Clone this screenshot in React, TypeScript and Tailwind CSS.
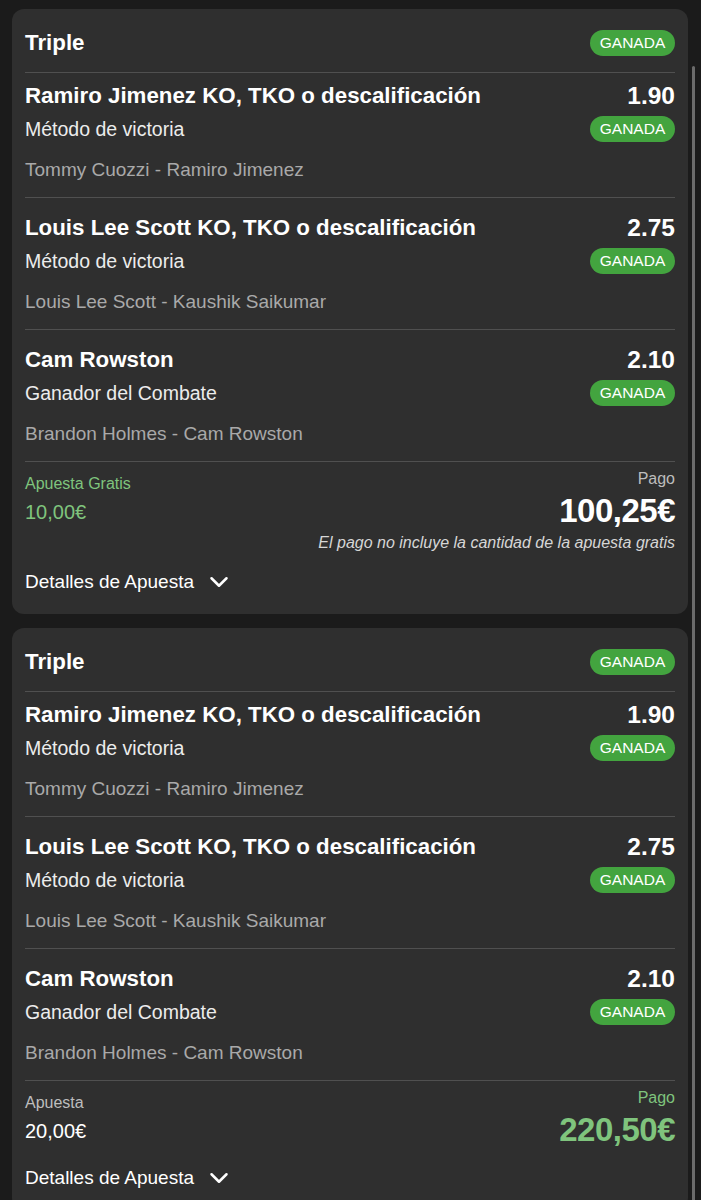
import { ChevronDown } from 'lucide-react';

interface Leg {
  pick: string;
  market: string;
  event: string;
  odds: string;
}

interface Bet {
  legs: Leg[];
  stakeLabel: string;
  stake: string;
  payout: string;
  freeBet: boolean;
}

const LEGS: Leg[] = [
  { pick: 'Ramiro Jimenez KO, TKO o descalificación', market: 'Método de victoria', event: 'Tommy Cuozzi - Ramiro Jimenez', odds: '1.90' },
  { pick: 'Louis Lee Scott KO, TKO o descalificación', market: 'Método de victoria', event: 'Louis Lee Scott - Kaushik Saikumar', odds: '2.75' },
  { pick: 'Cam Rowston', market: 'Ganador del Combate', event: 'Brandon Holmes - Cam Rowston', odds: '2.10' },
];

const BETS: Bet[] = [
  { legs: LEGS, stakeLabel: 'Apuesta Gratis', stake: '10,00€', payout: '100,25€', freeBet: true },
  { legs: LEGS, stakeLabel: 'Apuesta', stake: '20,00€', payout: '220,50€', freeBet: false },
];

function Badge() {
  return (
    <span className="inline-flex h-[26px] w-[85px] items-center justify-center rounded-full bg-[#43a43f] text-[15.5px] leading-none text-white">
      GANADA
    </span>
  );
}

function LegRow({ leg, first }: { leg: Leg; first: boolean }) {
  return (
    <div className={`border-t border-[#505050] pb-[15px] ${first ? 'pt-[10px]' : 'pt-[17px]'}`}>
      <div className="flex items-center justify-between">
        <span className="text-[22.3px] leading-[26px] font-bold text-white">{leg.pick}</span>
        <span className="text-[24.5px] leading-[26px] font-bold text-white">{leg.odds}</span>
      </div>
      <div className="mt-[7px] flex items-center justify-between">
        <span className="text-[19.5px] leading-[24px] text-[#ececec]">{leg.market}</span>
        <Badge />
      </div>
      <div className="mt-[16px] text-[19px] leading-[24px] text-[#a9a9a9]">{leg.event}</div>
    </div>
  );
}

function BetCard({ bet }: { bet: Bet }) {
  return (
    <div className="rounded-[12px] bg-[#2f2f2f] px-[13px]">
      <div className="flex items-center justify-between pt-[21px] pb-[16px]">
        <span className="text-[22.3px] leading-[26px] font-bold text-white">Triple</span>
        <Badge />
      </div>
      {bet.legs.map((leg, i) => (
        <LegRow key={i} leg={leg} first={i === 0} />
      ))}
      <div className="border-t border-[#505050] pb-[20px]">
        <div className="flex justify-between">
          <div className="pt-[12px]">
            <div className={`text-[16px] leading-[20px] ${bet.freeBet ? 'text-[#7fc47d]' : 'text-[#bdbdbd]'}`}>
              {bet.stakeLabel}
            </div>
            <div className={`mt-[6px] text-[20px] leading-[24px] ${bet.freeBet ? 'text-[#7fc47d]' : 'text-white'}`}>
              {bet.stake}
            </div>
          </div>
          <div className="flex flex-col items-end pt-[7px]">
            <div className={`text-[16px] leading-[20px] ${bet.freeBet ? 'text-[#bdbdbd]' : 'text-[#7fc47d]'}`}>Pago</div>
            <div className={`mt-[3px] text-[33px] leading-[38px] font-bold tracking-[-0.5px] ${bet.freeBet ? 'text-white' : 'text-[#7fc47d]'}`}>
              {bet.payout}
            </div>
            {bet.freeBet && (
              <div className="mt-[3px] text-[16px] leading-[20px] italic text-[#d6d6d6]">
                El pago no incluye la cantidad de la apuesta gratis
              </div>
            )}
          </div>
        </div>
        <div className="mt-[17px] flex h-[24px] items-center gap-[10px]">
          <span className="text-[19px] leading-[24px] text-white">Detalles de Apuesta</span>
          <ChevronDown size={30} strokeWidth={2} className="text-white" />
        </div>
      </div>
    </div>
  );
}

export default function App() {
  return (
    <div
      className="relative min-h-screen bg-[#1b1b1b] pt-[9px] pl-[12px] pr-[13px] pb-[20px]"
      style={{ fontFamily: '"Liberation Sans", Arial, sans-serif' }}
    >
      <div className="flex flex-col gap-[14px]">
        {BETS.map((bet, i) => (
          <BetCard key={i} bet={bet} />
        ))}
      </div>
      <div className="absolute right-[6px] top-[66px] bottom-0 w-[3px] rounded-full bg-[#6b6b6b]" />
    </div>
  );
}
